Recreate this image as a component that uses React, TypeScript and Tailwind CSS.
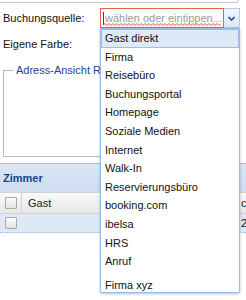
const items = [
  "Gast direkt",
  "Firma",
  "Reisebüro",
  "Buchungsportal",
  "Homepage",
  "Soziale Medien",
  "Internet",
  "Walk-In",
  "Reservierungsbüro",
  "booking.com",
  "ibelsa",
  "HRS",
  "Anruf",
];

function Check() {
  return (
    <div className="w-[12px] h-[12px] border border-[#a9a9a9] bg-gradient-to-b from-[#fdfdfd] to-[#e2e2e2] rounded-[1px]" />
  );
}

export default function App() {
  return (
    <div className="relative w-[246px] h-[300px] overflow-hidden bg-white font-['Liberation_Sans',Arial,sans-serif] text-[11px] text-[#111]">
      {/* box above */}
      <div className="h-[3px] w-[239px] border-b border-r border-[#c9c9c9] rounded-br-[3px]" />

      {/* Buchungsquelle */}
      <div className="mt-[5px] flex items-center h-[20px]">
        <div className="w-[100px] pl-[3px]">Buchungsquelle:</div>
        <div className="relative w-[124px] h-[20px] border border-[#e8643f] bg-white flex items-center pl-[4px] text-[#9a9a9a]">
          <span>wählen oder eintippen...</span>
          <div className="absolute left-[2px] top-[3px] w-px h-[13px] bg-[#444]" />
          <svg className="absolute left-[2px] bottom-[1px]" width="118" height="3" viewBox="0 0 118 3">
            <polyline
              fill="none"
              stroke="#e84a3a"
              strokeWidth="1"
              points={Array.from({ length: 60 }, (_, i) => `${i * 2},${i % 2 ? 0.5 : 2.5}`).join(" ")}
            />
          </svg>
        </div>
        <div className="w-[16px] h-[20px] border-y border-r border-[#b5c8e6] bg-gradient-to-b from-[#f3f7fd] to-[#dbe6f5] flex items-center justify-center">
          <svg width="7" height="5" viewBox="0 0 7 5">
            <polyline points="0.5,1 3.5,4 6.5,1" fill="none" stroke="#2b4f86" strokeWidth="1.6" />
          </svg>
        </div>
      </div>

      {/* Eigene Farbe */}
      <div className="mt-[8px] h-[16px] leading-[16px] pl-[3px]">Eigene Farbe:</div>

      {/* fieldset */}
      <fieldset className="mt-[12px] ml-[3px] w-[234px] h-[93px] border border-[#b5b8c8] px-[9px]">
        <legend className="px-[3px] text-[#1d4688] leading-[13px]">Adress-Ansicht Re</legend>
      </fieldset>

      {/* Zimmer panel */}
      <div className="mt-[6px] border-t border-[#99bbe8]">
        <div className="h-[28px] bg-gradient-to-b from-[#dbe7f5] to-[#cddcf0] flex items-center pl-[3px] font-bold text-[#15428b]">
          Zimmer
        </div>
        <div className="h-[22px] flex border-y border-[#d0d0d0] bg-gradient-to-b from-[#fafafa] to-[#e7e7e7]">
          <div className="w-[22px] border-r border-[#d0d0d0] flex items-center justify-center">
            <Check />
          </div>
          <div className="flex-1 flex items-center pl-[6px] text-[#222]">Gast</div>
          <div className="w-[8px] border-l border-[#d0d0d0] flex items-center pl-[2px] text-[#222]">c</div>
        </div>
        <div className="h-[19px] flex bg-[#dfe8f6] border-b border-dotted border-[#99bbe8]">
          <div className="w-[22px] flex items-center justify-center">
            <Check />
          </div>
          <div className="flex-1" />
          <div className="w-[8px] flex items-center pl-[3px]">2</div>
        </div>
      </div>

      {/* dropdown list */}
      <div className="absolute left-[100px] top-[28px] w-[140px] h-[265px] border border-[#99bbe8] bg-white shadow-[0_1px_3px_rgba(0,0,0,0.25)] rounded-b-[2px]">
        {items.map((it, i) => (
          <div
            key={it}
            className={
              i === 0
                ? "h-[18.6px] flex items-center pl-[3px] bg-[#dfe8f6] border border-[#a3bae9]"
                : "h-[18.6px] flex items-center pl-[4px]"
            }
          >
            {it}
          </div>
        ))}
        <div className="mt-[5px] h-[18.6px] flex items-center pl-[4px]">Firma xyz</div>
      </div>
    </div>
  );
}
